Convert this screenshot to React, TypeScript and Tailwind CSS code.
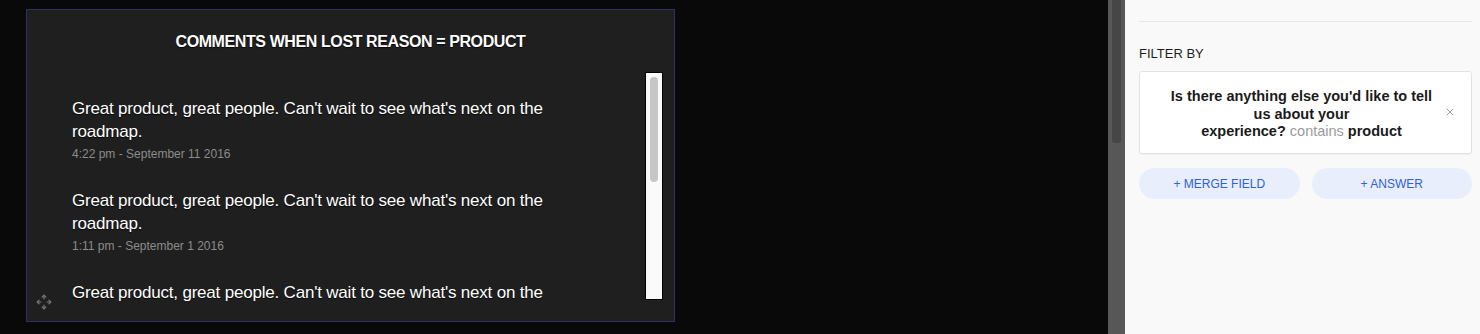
import { X } from "lucide-react";

const comments = [
  { text: "Great product, great people. Can't wait to see what's next on the roadmap.", date: "4:22 pm - September 11 2016" },
  { text: "Great product, great people. Can't wait to see what's next on the roadmap.", date: "1:11 pm - September 1 2016" },
  { text: "Great product, great people. Can't wait to see what's next on the roadmap.", date: "9:03 am - August 28 2016" },
];

function MoveIcon() {
  return (
    <svg width="18" height="18" viewBox="0 0 24 24" fill="none" stroke="#7a7a7a" strokeWidth="1.6" strokeLinecap="round" strokeLinejoin="round">
      <path d="M12 3v5M12 16v5M3 12h5M16 12h5" />
      <path d="M9.5 5.5 12 3l2.5 2.5M9.5 18.5 12 21l2.5-2.5M5.5 9.5 3 12l2.5 2.5M18.5 9.5 21 12l-2.5 2.5" />
    </svg>
  );
}

export default function App() {
  return (
    <div className="flex h-[334px] w-[1480px] overflow-hidden bg-[#090909] font-['Liberation_Sans',Arial,sans-serif]">
      {/* canvas */}
      <div className="flex w-[1108px] shrink-0 pl-[26px] pt-[9px]">
        <div className="relative flex h-[313px] w-[649px] flex-col border border-[#2b3262] bg-[#1f1f1f]">
          <h2 className="mt-[20px] text-center text-[16px] font-bold tracking-[-0.4px] text-white [text-shadow:0_1px_1px_rgba(0,0,0,0.9)]">
            COMMENTS WHEN LOST REASON = PRODUCT
          </h2>
          <div className="mt-[18px] flex h-[229px] overflow-hidden">
            <div className="flex-1 overflow-hidden pl-[45px] pr-[80px] pt-[25px]">
              {comments.map((c, i) => (
                <div key={i} className="mb-[27px]">
                  <p className="text-[17px] leading-[23px] tracking-[-0.2px] text-white [text-shadow:0_1px_1px_rgba(0,0,0,0.8)]">
                    {c.text}
                  </p>
                  <p className="mt-[3px] text-[12px] leading-[16px] text-[#8c8c8c]">{c.date}</p>
                </div>
              ))}
            </div>
            <div className="mr-[11px] h-[228px] w-[18px] shrink-0 border border-black bg-[#fafafa] px-[4px] pt-[4px]">
              <div className="h-[105px] w-full rounded-full bg-[#c6c6c6]" />
            </div>
          </div>
          <div className="absolute bottom-[10px] left-[8px]">
            <MoveIcon />
          </div>
        </div>
      </div>

      {/* page scrollbar */}
      <div className="w-[17px] shrink-0 bg-[#575757] px-[4px]">
        <div className="h-[143px] w-full rounded-b-[3px] bg-[#464646]" />
      </div>

      {/* side panel */}
      <div className="flex-1 bg-[#f9f9f9] pl-[14px] pr-[8px]">
        <div className="mt-[21px] border-t border-[#e6e6e6]" />
        <p className="mt-[24px] text-[13px] leading-[16px] text-[#1e1e1e]">FILTER BY</p>
        <div className="relative mt-[9px] flex h-[83px] items-center justify-center rounded-[3px] border border-[#e2e2e2] bg-white pl-[16px] pr-[24px] pt-[4px] shadow-[0_1px_1px_rgba(0,0,0,0.04)]">
          <p className="text-center text-[14.5px] font-bold leading-[17.5px] text-[#1a1a1a]">
            Is there anything else you'd like to tell
            <br />
            us about your
            <br />
            experience? <span className="font-normal text-[#9b9b9b]">contains</span> product
          </p>
          <X className="absolute right-[15px] top-[34px] h-[12px] w-[12px] text-[#9a9a9a]" strokeWidth={2} />
        </div>
        <div className="mt-[14px] flex gap-[12px]">
          <button className="h-[31px] flex-1 rounded-full bg-[#e8eefb] text-[12px] text-[#2f62d6]">+ MERGE FIELD</button>
          <button className="h-[31px] flex-1 rounded-full bg-[#e8eefb] text-[12px] text-[#2f62d6]">+ ANSWER</button>
        </div>
      </div>
    </div>
  );
}
